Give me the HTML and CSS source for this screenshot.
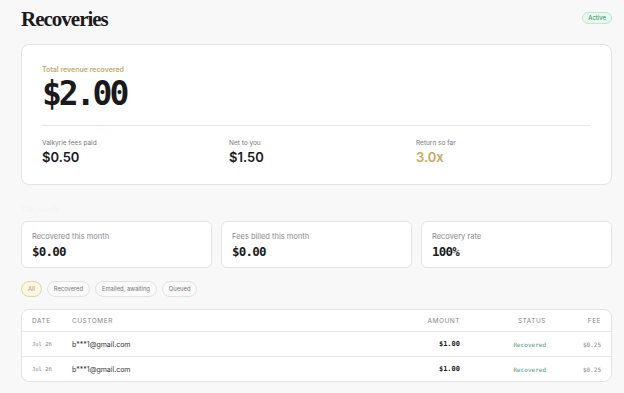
FILE: index.html
```html
<!DOCTYPE html>
<html lang="en">
<head>
  <meta charset="UTF-8">
  <title>Recoveries</title>
  <link rel="stylesheet" href="styles.css">
</head>
<body>

<div class="page">
  <header class="top">
    <h1>Recoveries</h1>
    <span class="badge">Active</span>
  </header>

  <section class="hero">
    <div class="hero-label">Total revenue recovered</div>
    <div class="hero-amount">$2.00</div>
    <div class="hero-split">
      <div>
        <div class="mini-label">Valkyrie fees paid</div>
        <div class="mini-value">$0.50</div>
      </div>
      <div>
        <div class="mini-label">Net to you</div>
        <div class="mini-value">$1.50</div>
      </div>
      <div>
        <div class="mini-label">Return so far</div>
        <div class="mini-value gold">3.0x</div>
      </div>
    </div>
  </section>

  <div class="section-label">This month</div>

  <div class="stats">
    <div class="stat">
      <div class="stat-label">Recovered this month</div>
      <div class="stat-value">$0.00</div>
    </div>
    <div class="stat">
      <div class="stat-label">Fees billed this month</div>
      <div class="stat-value">$0.00</div>
    </div>
    <div class="stat">
      <div class="stat-label">Recovery rate</div>
      <div class="stat-value">100%</div>
    </div>
  </div>

  <div class="filters">
    <span class="pill active">All</span>
    <span class="pill">Recovered</span>
    <span class="pill">Emailed, awaiting</span>
    <span class="pill">Queued</span>
  </div>

  <div class="table-card">
    <div class="row head">
      <span>Date</span>
      <span>Customer</span>
      <span class="r">Amount</span>
      <span class="r">Status</span>
      <span class="r">Fee</span>
    </div>
    <div class="row">
      <span class="mono date">Jul 26</span>
      <span class="cust">b***1@gmail.com</span>
      <span class="mono r amt">$1.00</span>
      <span class="mono r status">Recovered</span>
      <span class="mono r fee">$0.25</span>
    </div>
    <div class="row">
      <span class="mono date">Jul 26</span>
      <span class="cust">b***1@gmail.com</span>
      <span class="mono r amt">$1.00</span>
      <span class="mono r status">Recovered</span>
      <span class="mono r fee">$0.25</span>
    </div>
  </div>
</div>

</body>
</html>
```

FILE: styles.css
```css
* { box-sizing: border-box; }
body {
  margin: 0;
  background: #f8f8f8;
  color: #1a1a1a;
  font-family: Inter, "Noto Sans", sans-serif;
}
.page {
  padding: 6px 12px 0 21px;
}
.top {
  display: flex;
  justify-content: space-between;
  align-items: center;
  height: 26px;
  margin-bottom: 12px;
}
.top h1 {
  margin: 0;
  font-family: "Liberation Serif", "DejaVu Serif", serif;
  font-size: 21px;
  font-weight: bold;
  letter-spacing: -1px;
  color: #1b1b1b;
}
.badge {
  font-size: 6px;
  color: #2f8a66;
  background: #e8f8f1;
  border: 1px solid #b8e9d4;
  border-radius: 10px;
  padding: 1px 5px;
  line-height: 8px;
  margin-top: -3px;
}
.hero {
  background: #fff;
  border: 1px solid #e4e4e4;
  border-radius: 8px;
  padding: 20px 20px 18px;
  height: 141px;
}
.hero-label {
  font-size: 7px;
  font-weight: 600;
  color: #c8a96a;
  line-height: 9px;
}
.hero-amount {
  font-family: "DejaVu Sans Mono", monospace;
  font-weight: bold;
  font-size: 33px;
  letter-spacing: -3px;
  line-height: 36px;
  margin-top: 2px;
  padding-bottom: 13px;
  border-bottom: 1px solid #e6e6e6;
}
.hero-split {
  display: grid;
  grid-template-columns: 187px 187px 1fr;
  padding-top: 13px;
}
.mini-label {
  font-size: 6.5px;
  color: #777;
  line-height: 8px;
}
.mini-value {
  font-size: 13px;
  font-weight: 600;
  line-height: 18px;
  margin-top: 1px;
}
.mini-value.gold { color: #c8a962; }
.section-label {
  font-size: 7px;
  color: #f3f3f3;
  margin: 20px 0 6px;
  line-height: 10px;
}
.stats {
  display: grid;
  grid-template-columns: repeat(3, 1fr);
  gap: 9px;
}
.stat {
  background: #fff;
  border: 1px solid #e4e4e4;
  border-radius: 6px;
  height: 47px;
  padding: 10px 10px;
}
.stat-label {
  font-size: 7.5px;
  color: #888;
  line-height: 10px;
}
.stat-value {
  font-family: "DejaVu Sans Mono", monospace;
  font-weight: bold;
  font-size: 12.5px;
  letter-spacing: -0.8px;
  line-height: 16px;
  margin-top: 2px;
}
.filters {
  display: flex;
  gap: 5px;
  margin: 13px 0 12px;
}
.pill {
  font-size: 5.8px;
  color: #777;
  background: #f9f9f9;
  border: 1px solid #e2e2e2;
  border-radius: 9px;
  height: 16px;
  line-height: 14px;
  padding: 0 6px;
}
.pill.active {
  color: #b59d5c;
  background: #faf6e4;
  border-color: #e2d5a4;
}
.table-card {
  background: #fff;
  border: 1px solid #e4e4e4;
  border-radius: 8px;
}
.row {
  display: grid;
  grid-template-columns: 40px 1fr 90px 86px 55px;
  align-items: center;
  height: 25px;
  padding: 0 10px 0 10px;
  border-top: 1px solid #e8e8e8;
  font-size: 7px;
}
.row.head {
  height: 21px;
  border-top: none;
  font-size: 6.5px;
  letter-spacing: 0.08em;
  text-transform: uppercase;
  color: #888;
}
.r { text-align: right; }
.mono { font-family: "DejaVu Sans Mono", monospace; }
.date { font-size: 5.5px; color: #888; }
.cust { color: #333; }
.amt { font-weight: bold; font-size: 7px; }
.status { color: #4a9a7a; font-size: 6px; }
.fee { color: #888; font-size: 6px; }
```
